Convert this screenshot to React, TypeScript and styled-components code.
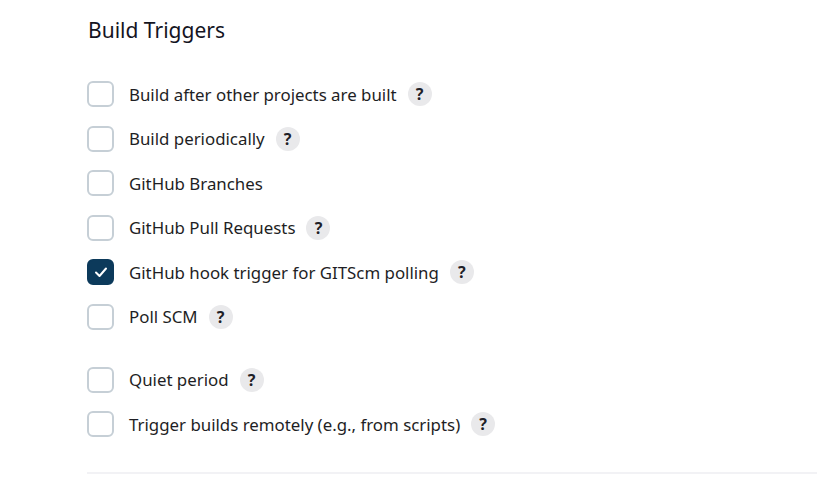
import React from "react";
import styled, { createGlobalStyle } from "styled-components";

const Global = createGlobalStyle`
  html, body { margin: 0; padding: 0; background: #ffffff; }
  body { font-family: "Noto Sans", "Open Sans", "Liberation Sans", sans-serif; color: #1f1f23; }
`;

const Page = styled.div`
  padding: 16px 0 0 87px;
  width: 817px;
  box-sizing: border-box;
`;

const Title = styled.h2`
  margin: 0 0 37px 1px;
  font-size: 21px;
  font-weight: 400;
  line-height: 28px;
  color: #14141f;
`;

const List = styled.div`
  display: flex;
  flex-direction: column;
`;

const Group = styled.div<{ $extra?: boolean }>`
  display: flex;
  flex-direction: column;
  gap: 18.5px;
  margin-top: ${(p) => (p.$extra ? "37px" : "0")};
`;

const Row = styled.label`
  display: flex;
  align-items: center;
  height: 26px;
  font-size: 16.85px;
  color: #1e1e24;
`;

const Box = styled.span<{ $checked?: boolean }>`
  box-sizing: border-box;
  width: 27px;
  height: 26px;
  border-radius: 6px;
  border: 2px solid ${(p) => (p.$checked ? "#0c3a5b" : "#c6cfd6")};
  background: ${(p) => (p.$checked ? "#0c3a5b" : "#ffffff")};
  display: flex;
  align-items: center;
  justify-content: center;
  margin-right: 15px;
  flex-shrink: 0;
`;

const Help = styled.span`
  width: 24px;
  height: 24px;
  border-radius: 50%;
  background: #e9e9eb;
  margin-left: 11px;
  display: flex;
  align-items: center;
  justify-content: center;
  font-size: 16px;
  font-weight: 700;
  color: #202026;
`;

const Divider = styled.div`
  margin-top: 35px;
  height: 2px;
  background: #f2f2f5;
`;

type Item = { label: string; help: boolean; checked?: boolean };

const first: Item[] = [
  { label: "Build after other projects are built", help: true },
  { label: "Build periodically", help: true },
  { label: "GitHub Branches", help: false },
  { label: "GitHub Pull Requests", help: true },
  { label: "GitHub hook trigger for GITScm polling", help: true, checked: true },
  { label: "Poll SCM", help: true },
];

const second: Item[] = [
  { label: "Quiet period", help: true },
  { label: "Trigger builds remotely (e.g., from scripts)", help: true },
];

const Check = () => (
  <svg width="14" height="12" viewBox="0 0 14 12" fill="none">
    <path d="M2 6.5 L5.5 10 L12 2.5" stroke="#ffffff" strokeWidth="2" strokeLinecap="round" strokeLinejoin="round" />
  </svg>
);

const Entry = ({ item }: { item: Item }) => (
  <Row>
    <Box $checked={item.checked}>{item.checked && <Check />}</Box>
    <span>{item.label}</span>
    {item.help && <Help>?</Help>}
  </Row>
);

export default function App() {
  return (
    <>
      <Global />
      <Page>
        <Title>Build Triggers</Title>
        <List>
          <Group>
            {first.map((i) => (
              <Entry key={i.label} item={i} />
            ))}
          </Group>
          <Group $extra>
            {second.map((i) => (
              <Entry key={i.label} item={i} />
            ))}
          </Group>
        </List>
        <Divider />
      </Page>
    </>
  );
}
